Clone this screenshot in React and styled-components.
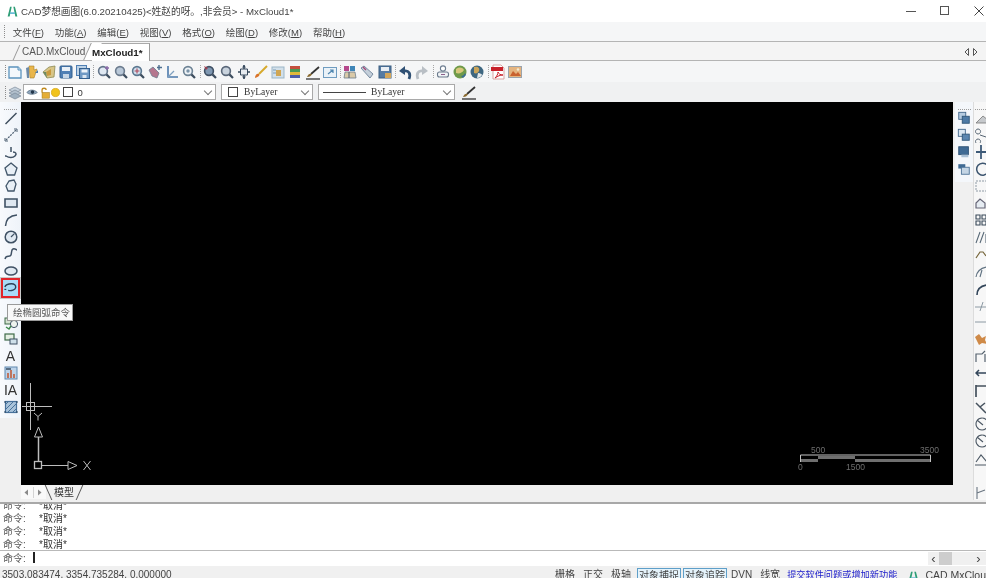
import styled, { createGlobalStyle } from "styled-components";

const GlobalStyle = createGlobalStyle`
  html, body {
    margin: 0;
    padding: 0;
    background: #f0f0f0;
  }
  body {
    font-family: "Liberation Sans", "Noto Sans CJK SC", sans-serif;
    color: #333;
  }
`;

const Lens = ({ c = "#5a6f86", fill = "#dfe8f2", extra }) => (
  <>
    <circle cx="7" cy="7" r="4.4" fill={fill} stroke={c} strokeWidth="1.6" />
    <path d="M10.4 10.4 14 14" stroke="#3d4d5e" strokeWidth="2.2" />
    {extra}
  </>
);

const glyphs = {
  // top toolbar
  newFile: (
    <>
      <path d="M2 3h9l3 3v8H2z" fill="#f4f8fc" stroke="#5b93bd" strokeWidth="1.3" />
      <path d="M11 3v3h3" fill="#cfe2f1" stroke="#5b93bd" />
    </>
  ),
  open: (
    <>
      <path d="M5 2h5v4l3-1-3 9H6z" fill="#e9b64b" stroke="#a9812c" strokeWidth=".6" />
      <path d="M2 4l3-1v11H3z" fill="#6d8aa8" />
      <path d="M11 9l3-3v3z" fill="#4f7fae" />
    </>
  ),
  openMore: (
    <>
      <path d="M2 8l6-5 6-1-1 11-7 1z" fill="#d8c587" stroke="#8c8a55" strokeWidth=".8" />
      <path d="M5 8l5-3v6l-4 1z" fill="#c99a3e" />
      <path d="M2 8l3 0 1 6z" fill="#6d8a63" />
    </>
  ),
  save: (
    <>
      <rect x="2" y="2" width="12" height="12" rx="1" fill="#4f7fb4" stroke="#33608f" />
      <rect x="4" y="3" width="8" height="4" fill="#e9f0f7" />
      <rect x="5" y="10" width="6" height="4" fill="#c6d6e6" />
    </>
  ),
  saveAll: (
    <>
      <rect x="1.5" y="1.5" width="10" height="10" fill="#bcd2e6" stroke="#4f7fb4" />
      <rect x="4.5" y="4.5" width="10" height="10" fill="#6f99c4" stroke="#33608f" />
      <rect x="6.5" y="5.5" width="6" height="3" fill="#eef4fa" />
      <rect x="7.5" y="11" width="4" height="3" fill="#dbe6f1" />
    </>
  ),
  zoomWindow: <Lens c="#62748a" extra={<path d="M11 2v4M9 4h4" stroke="#8a6aa8" strokeWidth="1.3" />} />,
  zoomIn: <Lens c="#6c7c8e" fill="#b9c8d8" />,
  zoomPlus: <Lens c="#5c7890" fill="#cfe0ee" extra={<path d="M7 4.6v4.8M4.6 7h4.8" stroke="#b0485a" strokeWidth="1.1" />} />,
  zoomArrow: (
    <>
      <path d="M2 6l4-3 6 6-2 5-5-2z" fill="#b5768e" stroke="#6c7c8e" strokeWidth=".8" />
      <path d="M12 1v5M10 3.5h5" stroke="#4d6f8f" strokeWidth="1.4" />
    </>
  ),
  axes: (
    <>
      <path d="M4 2v11h10" fill="none" stroke="#4b79ab" strokeWidth="1.6" />
      <path d="M4 13l6-6" stroke="#7fa0c0" strokeWidth="1.2" />
    </>
  ),
  zoomCenter: <Lens c="#6c8294" fill="#eef3f7" extra={<circle cx="7" cy="7" r="1.7" fill="#7a93a8" />} />,
  zoomDark: <Lens c="#3f5064" fill="#7f98b2" extra={<path d="M2 2l4 2-2 2z" fill="#a33e4e" />} />,
  zoomPlain: <Lens c="#596779" fill="#c9d3dd" />,
  pan: (
    <>
      <path d="M8 1v14M2 8h12" stroke="#36495c" strokeWidth="1.5" />
      <path d="M4.5 5h7v6h-7z" fill="#e6ebf0" stroke="#36495c" />
      <path d="M8 1l-2 2.4h4zM8 15l-2-2.4h4z" fill="#36495c" />
    </>
  ),
  brushYellow: (
    <>
      <path d="M14 2 6 10" stroke="#d6a92c" strokeWidth="2" />
      <path d="M2 14c0-3 2-5 4-4 1 1 0 3-4 4z" fill="#d9742a" />
    </>
  ),
  gridBlue: (
    <>
      <rect x="2" y="3" width="12" height="11" fill="#d2e0ea" stroke="#9bb5c7" />
      <rect x="6" y="6" width="5" height="6" fill="#d0a653" />
      <path d="M3 6h3M3 9h3" stroke="#7b9cb8" />
    </>
  ),
  stack: (
    <>
      <rect x="3" y="2" width="10" height="3" fill="#c5503f" />
      <rect x="3" y="5" width="10" height="3" fill="#4a9a55" />
      <rect x="3" y="8" width="10" height="3" fill="#e0b93c" />
      <rect x="3" y="11" width="10" height="3" fill="#4d5ea8" />
    </>
  ),
  brushDark: (
    <>
      <path d="M14 3 6 10" stroke="#333" strokeWidth="1.8" />
      <path d="M2 13c1-3 3-4 5-3-1 2-2 3-5 3z" fill="#8a6a2f" />
      <path d="M1 15h14" stroke="#222" strokeWidth="1.2" />
    </>
  ),
  windowArrow: (
    <>
      <rect x="1.5" y="3.5" width="13" height="10" fill="#eaf2f8" stroke="#6f9cc0" />
      <path d="M6 10l5-4M8 6h3v3" fill="none" stroke="#4f86b0" strokeWidth="1.2" />
    </>
  ),
  chart: (
    <>
      <rect x="2" y="2" width="5" height="5" fill="#b5488c" />
      <rect x="8" y="2" width="5" height="5" fill="#3f86b8" />
      <path d="M3 8h10l1 6H2z" fill="#d9c9a8" stroke="#6d7d8d" strokeWidth=".8" />
      <path d="M7 8v6" stroke="#4d5d6d" />
    </>
  ),
  tag: (
    <>
      <path d="M2 4l3-2 9 8-3 4z" fill="#c4cfda" stroke="#6d8298" strokeWidth=".9" />
      <path d="M4 3l3 3" stroke="#a54a78" strokeWidth="1.4" />
    </>
  ),
  disk: (
    <>
      <rect x="2" y="2" width="12" height="12" fill="#557ba3" stroke="#3b5d80" />
      <rect x="4" y="3" width="8" height="4" fill="#e9eef4" />
      <path d="M8 9h6v5H8z" fill="#d3a65a" />
    </>
  ),
  undo: (
    <>
      <path d="M12 15c2-5 0-9-5-8" fill="none" stroke="#2f5074" strokeWidth="2.8" />
      <path d="M8 2 2 7l6 4z" fill="#2f5074" />
    </>
  ),
  redo: (
    <>
      <path d="M4 15C2 10 4 6 9 7" fill="none" stroke="#b9bfc5" strokeWidth="2.8" />
      <path d="M8 2l6 5-6 4z" fill="#b9bfc5" />
    </>
  ),
  plotter: (
    <>
      <circle cx="8" cy="4.5" r="2.6" fill="#fff" stroke="#6f7f92" strokeWidth="1.1" />
      <rect x="2.5" y="8" width="11" height="5" rx="2" fill="#f0f3f6" stroke="#6a7a8c" strokeWidth="1.1" />
      <path d="M6 10.5h4" stroke="#8c5f8c" />
    </>
  ),
  globeGreen: (
    <>
      <circle cx="8" cy="8" r="6.5" fill="#6f9a4a" />
      <path d="M4 5c3-2 6-2 8 1-2 3-5 4-8 3z" fill="#d7c77b" />
      <path d="M9 12c2 0 3-1 4-3l1 2-3 3z" fill="#3a6d93" />
    </>
  ),
  globeDark: (
    <>
      <circle cx="8" cy="8" r="6.5" fill="#3d6680" />
      <path d="M5 3c4-1 6 1 5 4-1 2-3 3-5 2z" fill="#c9a45a" />
      <path d="M9 9c2 0 4 1 4 2-1 2-3 3-5 3z" fill="#e4e8ea" />
    </>
  ),
  pdf: (
    <>
      <path d="M3 1h8l3 3v11H3z" fill="#fff" stroke="#d9a3a3" />
      <rect x="1" y="3" width="12" height="4" fill="#c8202a" />
      <path d="M5 14c2-2 3-4 3-6 1 2 2 3 5 3-3 0-5 1-8 3z" fill="none" stroke="#c8202a" />
    </>
  ),
  picture: (
    <>
      <rect x="1.5" y="2.5" width="13" height="11" fill="#e5b47f" stroke="#9aa3ac" />
      <path d="M3 12l3-5 3 3 2-2 3 4z" fill="#c9622f" />
      <circle cx="11" cy="5.5" r="1.3" fill="#f4ead2" />
    </>
  ),
  // second toolbar
  layers: (
    <>
      <path d="M8 3l6 3-6 3-6-3z" fill="#c7d3de" stroke="#7b8a99" strokeWidth=".7" />
      <path d="M8 6l6 3-6 3-6-3z" fill="#b2c0cd" stroke="#7b8a99" strokeWidth=".7" />
      <path d="M8 9l6 3-6 3-6-3z" fill="#9fb0bf" stroke="#7b8a99" strokeWidth=".7" />
    </>
  ),
  eye: (
    <>
      <path d="M1 8c3-4 9-4 13 0-4 3-10 3-13 0z" fill="#90a7bd" stroke="#52677c" strokeWidth=".8" />
      <circle cx="8" cy="7.5" r="2.2" fill="#24384c" />
    </>
  ),
  lock: (
    <>
      <path d="M5 8V5c0-3 5-3 5 0" fill="none" stroke="#c08a1e" strokeWidth="1.6" />
      <rect x="5" y="8" width="9" height="7" fill="#e4ad36" stroke="#a87c1d" strokeWidth=".7" />
    </>
  ),
  sun: <circle cx="8" cy="8" r="5" fill="#f1c31c" stroke="#d9a918" />,
  // left draw toolbar
  line: <path d="M2.5 14 13.5 3" stroke="#3c4c5c" strokeWidth="1.5" />,
  xline: (
    <>
      <path d="M3 13 13 3" stroke="#4e6072" strokeWidth="1.2" strokeDasharray="2 1" />
      <path d="M2 11v3h3M11 2h3v3" fill="none" stroke="#4e6072" />
    </>
  ),
  pline: (
    <path d="M2 12h1c3 2 7 2 9 0 2-2 1-4-2-4M8 3v5" fill="none" stroke="#3f5164" strokeWidth="1.5" />
  ),
  pentagon: <path d="M8 2l6 5-2.4 7H4.4L2 7z" fill="#e8eff6" stroke="#42566a" strokeWidth="1.3" />,
  blob: <path d="M6 3l5-1 2 4-2 7H5L3 8z" fill="#e8eff6" stroke="#42566a" strokeWidth="1.3" />,
  rect: <path d="M2 4h12v8H2z" fill="#dfe8f1" stroke="#3f5164" strokeWidth="1.6" />,
  arc: <path d="M2.5 14C3 7 7 3.5 14 3" fill="none" stroke="#3f5164" strokeWidth="1.5" />,
  circle: (
    <>
      <circle cx="8" cy="8" r="5.8" fill="#e0e9f2" stroke="#3f5164" strokeWidth="1.5" />
      <path d="M8 8l3.4-3.4" stroke="#3f5164" strokeWidth="1.2" />
    </>
  ),
  spline: (
    <path d="M2 13c1-5 5-1 6-4s0-5 2-6 3 1 4 1" fill="none" stroke="#3f5164" strokeWidth="1.5" />
  ),
  ellipse: <ellipse cx="8" cy="8" rx="6" ry="4" fill="#e0e9f2" stroke="#3f5164" strokeWidth="1.5" />,
  ellipseArc: (
    <>
      <path d="M2 7C3 4 6 3.500 9 3.500c3 0 5 1.500 4.500 4C13 10 9 11.500 5.500 10.500" fill="none" stroke="#2d4257" strokeWidth="1.5" />
      <path d="M1.500 9.500h2" stroke="#2d4257" strokeWidth="1.300" />
    </>
  ),
  insert: (
    <>
      <rect x="2" y="4" width="9" height="6" fill="#d4e2d0" stroke="#3f6a48" />
      <circle cx="11" cy="10" r="3.600" fill="#eef3ee" stroke="#3f5164" />
      <path d="M3 13l3 2 2-3" fill="none" stroke="#3e8a4c" strokeWidth="1.4" />
    </>
  ),
  block: (
    <>
      <rect x="2" y="3" width="9" height="6" fill="#e5efe3" stroke="#3f6a48" strokeWidth="1.2" />
      <rect x="7" y="8" width="7" height="5" fill="#cfe0ea" stroke="#3f5164" />
    </>
  ),
  hatch: (
    <>
      <rect x="2" y="2" width="12" height="12" fill="#bcd3ea" stroke="#5f87ad" />
      <path d="M5 13V8M8 13V5M11 13V9" stroke="#c0552f" strokeWidth="1.5" />
      <path d="M3 4h5" stroke="#2d4257" strokeWidth="1.400" />
    </>
  ),
  region: (
    <>
      <rect x="2.500" y="2.500" width="11" height="11" fill="#a9c3da" stroke="#47719a" strokeWidth="1.200" />
      <path d="M2 6l4-4M2 11l9-9M4 14l10-10M9 14l5-5" stroke="#47719a" />
      <path d="M1 3h2M13 3h2M1 13h2M13 13h2" stroke="#25425f" />
    </>
  ),
  // right side toolbars
  viewA: (
    <>
      <rect x="2" y="1.500" width="8" height="8" fill="#b5cbe0" stroke="#3e6388" />
      <rect x="6" y="6" width="8" height="8" fill="#4d7aa6" stroke="#2e5578" />
    </>
  ),
  viewB: (
    <>
      <rect x="1.500" y="1.500" width="8" height="8" fill="#dbe7f2" stroke="#3e6388" />
      <rect x="6" y="7" width="8" height="7" fill="#5b86b0" stroke="#2e5578" />
    </>
  ),
  viewC: (
    <>
      <rect x="2" y="2" width="11" height="9" fill="#3f6a94" stroke="#2b4f72" />
      <rect x="5" y="11" width="8" height="3" fill="#a9c0d6" />
    </>
  ),
  viewD: (
    <>
      <rect x="1.500" y="2.500" width="8" height="5" fill="#3f6a94" />
      <rect x="5" y="6" width="9" height="8" fill="#c4d5e5" stroke="#4a7096" />
    </>
  ),
  erase: <path d="M1 13 8 6l6 5-3 2z" fill="#c6c9cc" stroke="#777" strokeWidth=".8" />,
  copy: <path d="M3 7a2.500 2.500 0 1 1 .1 0M3 12a2.500 2.500 0 1 0 .1 0M5 8l9 3" fill="none" stroke="#556472" strokeWidth="1" />,
  move: <path d="M6 1v14M1 8h14" stroke="#3d5a78" strokeWidth="1.800" />,
  rotate: <path d="M12 4A6 6 0 1 0 13 11" fill="none" stroke="#3d5670" strokeWidth="1.500" />,
  scale: <path d="M1 3h11v10H1z" fill="none" stroke="#8f9ba6" strokeDasharray="2 1" />,
  mirror: <path d="M1 13V8l4-4 5 4v5z" fill="#e6ecf2" stroke="#667" strokeWidth="1.200" />,
  array: <path d="M1 3h4v4H1zM7 3h4v4H7zM1 9h4v4H1zM7 9h4v4H7z" fill="none" stroke="#3a4a5a" strokeWidth="1.100" />,
  offset: <path d="M5 3 1 14M9 3 5 14M11 14V5" fill="none" stroke="#5a6a78" strokeWidth="1.100" />,
  chamfer: <path d="M1 12 5 6h3l3 4" fill="none" stroke="#75653a" strokeWidth="1.200" />,
  trim: <path d="M1 14C2 8 5 5 12 4M5 14 7 7" fill="none" stroke="#607282" strokeWidth="1.100" />,
  fillet: <path d="M2 15C2 9 5 6 12 5" fill="none" stroke="#33465a" strokeWidth="1.600" />,
  extend: <path d="M0 10h13M8 5 5 14" stroke="#8c99a3" strokeWidth="1" />,
  dash: <path d="M0 8h12" stroke="#8c99a3" strokeWidth="1" />,
  explode: <path d="M0 6l4-3 3 4 4-2-1 4 2 4-5-1-3 2z" fill="#cf8a48" />,
  stretch: <path d="M1 14V6h6l3-3M10 6v8" fill="none" stroke="#56636f" strokeWidth="1.200" />,
  arrow: <path d="M1 8h11M4 5 1 8l3 3" fill="none" stroke="#33465a" strokeWidth="1.500" />,
  dim: <path d="M1 3v12M1 4h10" stroke="#46525e" strokeWidth="1.700" />,
  wrench: <path d="M1 4l4 4 6 6M5 8l5-4" fill="none" stroke="#46525e" strokeWidth="1.500" />,
  clock: <path d="M7 2a6 6 0 1 0 .1 0M2 4l6 5" fill="none" stroke="#4c5864" strokeWidth="1.100" />,
  roof: <path d="M1 12 6 5l6 7M0 15h14" fill="none" stroke="#4c5864" strokeWidth="1.100" />,
  corner: <path d="M2 3v12M2 9l8-3" fill="none" stroke="#6a7682" strokeWidth="1.100" />,
  logo: (
    <>
      <path d="M2 14 5 2h2L4.500 14zM9 2h2l3 12h-2.500z" fill="#2f9e77" />
      <path d="M5 9h6v2H5z" fill="#5fb8d4" />
    </>
  ),
};

const Glyph = ({ name, size = 16 }) => (
  <svg width={size} height={size} viewBox="0 0 16 16">
    {glyphs[name]}
  </svg>
);

const topTools = [
  ["newFile", "open", "openMore", "save", "saveAll"],
  ["zoomWindow", "zoomIn", "zoomPlus", "zoomArrow", "axes", "zoomCenter"],
  ["zoomDark", "zoomPlain", "pan", "brushYellow", "gridBlue", "stack", "brushDark", "windowArrow"],
  ["chart", "tag", "disk"],
  ["undo", "redo"],
  ["plotter", "globeGreen", "globeDark"],
  ["pdf", "picture"],
];

const drawTools = [
  "line", "xline", "pline", "pentagon", "blob", "rect", "arc", "circle", "spline", "ellipse",
  "ellipseArc", "blank", "insert", "block", "A", "hatch", "IA", "region",
];

const viewTools = ["viewA", "viewB", "viewC", "viewD"];

const modifyTools = [
  "erase", "copy", "move", "rotate", "scale", "mirror", "array", "offset", "chamfer", "trim",
  "fillet", "extend", "dash", "explode", "stretch", "arrow", "dim", "wrench", "clock", "clock",
  "roof", "blank", "corner",
];

const menus = [
  ["文件", "F"], ["功能", "A"], ["编辑", "E"], ["视图", "V"],
  ["格式", "O"], ["绘图", "D"], ["修改", "M"], ["帮助", "H"],
];

const history = ["*取消*", "*取消*", "*取消*", "*取消*"];

const statusItems = [
  { label: "栅格" },
  { label: "正交" },
  { label: "极轴" },
  { label: "对象捕捉", on: true },
  { label: "对象追踪", on: true },
  { label: "DVN" },
  { label: "线宽" },
];

export default function App() {
  return (
    <>
      <GlobalStyle />
      <Shell>
        <TitleBar>
          <Glyph name="logo" size={13} />
          <TitleText>CAD梦想画图(6.0.20210425)&lt;姓赵的呀。,非会员&gt; - MxCloud1*</TitleText>
          <WindowButtons>
            <WindowButton>
              <svg width="11" height="11"><path d="M0 5.500h10" stroke="#555" /></svg>
            </WindowButton>
            <WindowButton>
              <svg width="11" height="11"><rect x=".5" y=".5" width="8" height="8" fill="none" stroke="#555" /></svg>
            </WindowButton>
            <WindowButton>
              <svg width="11" height="11"><path d="M.5 .5l9 9M9.500 .5l-9 9" stroke="#444" /></svg>
            </WindowButton>
          </WindowButtons>
        </TitleBar>

        <MenuBar>
          <Gripper />
          {menus.map(([label, key]) => (
            <MenuItem key={key}>
              {label}(<u>{key}</u>)
            </MenuItem>
          ))}
        </MenuBar>

        <DocTabs>
          <InactiveTab>CAD.MxCloud</InactiveTab>
          <ActiveTab>MxCloud1*</ActiveTab>
          <TabArrows>
            <svg width="16" height="8">
              <path d="M4.500 .5v7L1 4zM9.500 .5v7L13 4z" fill="none" stroke="#555" />
            </svg>
          </TabArrows>
        </DocTabs>

        <Toolbar>
          <Gripper />
          {topTools.map((group, i) => (
            <ToolGroup key={i}>
              {group.map((name) => (
                <ToolCell key={name}>
                  <Glyph name={name} />
                </ToolCell>
              ))}
            </ToolGroup>
          ))}
        </Toolbar>

        <LayerBar>
          <Gripper />
          <ToolCell>
            <Glyph name="layers" />
          </ToolCell>
          <Combo $width={193}>
            <ComboIcons>
              <Glyph name="eye" size={13} />
              <Glyph name="lock" size={13} />
              <Glyph name="sun" size={13} />
              <Swatch />
            </ComboIcons>
            <ComboText $plain>0</ComboText>
            <Chevron />
          </Combo>
          <Combo $width={92} $gap={6}>
            <Swatch />
            <ComboText>ByLayer</ComboText>
            <Chevron />
          </Combo>
          <Combo $width={137} $gap={5}>
            <LineSample />
            <ComboText>ByLayer</ComboText>
            <Chevron />
          </Combo>
          <ToolCell>
            <Glyph name="brushDark" />
          </ToolCell>
        </LayerBar>

        <Workspace>
          <LeftDock>
            <DrawToolbar>
              <VerticalGripper />
              {drawTools.map((name, i) => (
                <SideCell key={i} $active={name === "ellipseArc"}>
                  {name === "A" || name === "IA" ? (
                    <TextTool>{name}</TextTool>
                  ) : name === "blank" ? null : (
                    <Glyph name={name} />
                  )}
                </SideCell>
              ))}
            </DrawToolbar>
            <Tooltip>绘椭圆弧命令</Tooltip>
          </LeftDock>

          <CenterColumn>
            <Canvas>
              <CanvasDrawing viewBox="21 102 932 383">
                <g stroke="#bdbdbd" fill="none">
                  <path d="M30.500 383v47M22 406.500h30" />
                  <rect x="26.500" y="402.500" width="8" height="8" />
                  <path d="M30.500 402.500v8M26.500 406.500h8" />
                  <path d="M34 413l4 3.500 4-3.500M38 416.500v4" />
                  <path d="M38.500 437v24" strokeWidth="1.500" />
                  <path d="M38.500 427l-4 10h8z" />
                  <rect x="34.500" y="461.500" width="7" height="7" strokeWidth="1.300" />
                  <path d="M42 465.500h26" />
                  <path d="M68 461.500l9 4-9 4z" />
                  <path d="M83.500 461l7 9M90.500 461l-7 9" />
                </g>
                <g fill="#6f6f6f" stroke="none">
                  <rect x="818" y="456" width="37" height="3" />
                  <rect x="801" y="459" width="17" height="3" />
                  <rect x="855" y="459" width="75" height="3" />
                </g>
                <path d="M800.500 462v-7h130v7" fill="none" stroke="#c4c4c4" />
                <ScaleLabels>
                  <text x="811" y="453">500</text>
                  <text x="920" y="453">3500</text>
                  <text x="798" y="470">0</text>
                  <text x="846" y="470">1500</text>
                </ScaleLabels>
              </CanvasDrawing>
            </Canvas>
            <ModelTabs>
              <ScrollArrows>
                <svg width="25" height="13">
                  <path d="M7 3.500v6L3.500 6.500z" fill="#8a8a8a" />
                  <path d="M17 3.500v6l3.500-3z" fill="#8a8a8a" />
                  <path d="M12.500 1v11" stroke="#d4d4d4" />
                </svg>
              </ScrollArrows>
              <ModelTab>模型</ModelTab>
            </ModelTabs>
          </CenterColumn>

          <RightDock>
            <ViewToolbar>
              <VerticalGripper />
              {viewTools.map((name) => (
                <SideCell key={name}>
                  <Glyph name={name} size={14} />
                </SideCell>
              ))}
            </ViewToolbar>
            <ModifyToolbar>
              <VerticalGripper />
              {modifyTools.map((name, i) => (
                <SideCell key={i} $left>
                  {name === "blank" ? null : <Glyph name={name} />}
                </SideCell>
              ))}
            </ModifyToolbar>
          </RightDock>
        </Workspace>

        <CommandWindow>
          <History>
            {history.map((text, i) => (
              <CommandLine key={i}>
                <Prompt>命令:</Prompt>
                {text}
              </CommandLine>
            ))}
          </History>
          <InputRow>
            <Prompt $short>命令:</Prompt>
            <Caret />
            <HScroll>
              <ScrollChevron>‹</ScrollChevron>
              <ScrollThumb />
              <ScrollChevron>›</ScrollChevron>
            </HScroll>
          </InputRow>
        </CommandWindow>

        <StatusBar>
          <Coords>3503.083474, 3354.735284, 0.000000</Coords>
          <StatusItems>
            {statusItems.map((item) => (
              <StatusItem key={item.label} $on={item.on}>
                {item.label}
              </StatusItem>
            ))}
            <StatusLink>提交软件问题或增加新功能</StatusLink>
            <Glyph name="logo" size={13} />
            <Brand>CAD MxCloud</Brand>
          </StatusItems>
        </StatusBar>
      </Shell>
    </>
  );
}

const Shell = styled.div`
  width: 986px;
  height: 578px;
  overflow: hidden;
  display: flex;
  flex-direction: column;
  background: #f0f0f0;
  filter: blur(0.35px);
`;

const TitleBar = styled.div`
  height: 22px;
  flex: none;
  display: flex;
  align-items: center;
  padding-left: 6px;
  background: #fff;
`;

const TitleText = styled.span`
  margin-left: 2px;
  font-size: 9.700px;
  color: #444;
  white-space: nowrap;
`;

const WindowButtons = styled.div`
  margin-left: auto;
  display: flex;
  gap: 23px;
  padding-right: 1px;
`;

const WindowButton = styled.div`
  width: 11px;
  height: 11px;
  display: flex;
`;

const MenuBar = styled.div`
  height: 20px;
  box-sizing: border-box;
  flex: none;
  display: flex;
  align-items: center;
  gap: 10.800px;
  padding-left: 4px;
  background: #f5f6f7;
  border-bottom: 1px solid #b4b4b4;
`;

const Gripper = styled.span`
  width: 1px;
  height: 13px;
  flex: none;
  margin-right: -1px;
  border-left: 1px dotted #8d8d8d;
`;

const MenuItem = styled.span`
  font-size: 9.500px;
  color: #444;
  white-space: nowrap;
  &:nth-child(2) {
    margin-left: -3px;
  }
  u {
    text-decoration-thickness: 1px;
  }
`;

const DocTabs = styled.div`
  height: 19px;
  box-sizing: border-box;
  flex: none;
  display: flex;
  align-items: flex-end;
  padding-left: 22px;
  background: #f4f4f4;
  border-bottom: 1px solid #b4b4b4;
`;

const InactiveTab = styled.span`
  font-size: 10px;
  color: #555;
  width: 70px;
  line-height: 17px;
  white-space: nowrap;
  position: relative;
  &::before {
    content: "";
    position: absolute;
    left: -6px;
    top: 2px;
    height: 15px;
    border-left: 1px solid #999;
    transform: skewX(-24deg);
  }
`;

const ActiveTab = styled.span`
  font-size: 9.800px;
  font-weight: bold;
  color: #222;
  width: 57px;
  height: 17px;
  line-height: 17px;
  margin-bottom: -1px;
  background: #fff;
  border-top: 1px solid #aaa;
  border-right: 1px solid #999;
  white-space: nowrap;
  position: relative;
  z-index: 1;
  &::before {
    content: "";
    position: absolute;
    left: -5px;
    top: -1px;
    width: 10px;
    height: 17px;
    background: #fff;
    border-left: 1px solid #999;
    transform: skewX(-24deg);
    z-index: -1;
  }
`;

const TabArrows = styled.div`
  margin-left: auto;
  height: 17px;
  display: flex;
  align-items: center;
  padding-right: 6px;
`;

const Toolbar = styled.div`
  height: 21px;
  flex: none;
  display: flex;
  align-items: center;
  padding-left: 5px;
  background: #f5f6f7;
`;

const ToolGroup = styled.div`
  display: flex;
  margin-right: 3.700px;
  position: relative;
  &:not(:last-child)::after {
    content: "";
    position: absolute;
    right: -3px;
    top: 2px;
    height: 13px;
    border-right: 1px dotted #a5a5a5;
  }
`;

const ToolCell = styled.span`
  width: 17.100px;
  height: 17px;
  flex: none;
  display: flex;
  align-items: center;
  justify-content: center;
`;

const LayerBar = styled.div`
  height: 20px;
  flex: none;
  display: flex;
  align-items: center;
  padding-left: 5px;
  background: #f0f1f2;
`;

const Combo = styled.div`
  width: ${(p) => p.$width}px;
  height: 16px;
  flex: none;
  box-sizing: border-box;
  margin-right: 5px;
  display: flex;
  align-items: center;
  gap: ${(p) => p.$gap || 0}px;
  padding-left: 4px;
  background: #fff;
  border: 1px solid #a9a9a9;
`;

const ComboIcons = styled.span`
  display: flex;
  align-items: center;
  margin-right: 5px;
  margin-left: -2px;
  & > svg {
    margin-right: -1.500px;
  }
`;

const Swatch = styled.span`
  width: 8px;
  height: 8px;
  flex: none;
  background: #fff;
  border: 1px solid #444;
  margin-left: 2px;
`;

const ComboText = styled.span`
  font-family: ${(p) => (p.$plain ? '"Liberation Sans"' : '"Liberation Serif"')}, serif;
  font-size: 9.500px;
  color: #333;
`;

const LineSample = styled.span`
  width: 43px;
  height: 0;
  flex: none;
  border-top: 1px solid #444;
`;

const Chevron = styled.span`
  margin-left: auto;
  margin-right: 4px;
  margin-top: -3px;
  width: 5px;
  height: 5px;
  border-right: 1px solid #777;
  border-bottom: 1px solid #777;
  transform: rotate(45deg);
`;

const Workspace = styled.div`
  height: 398px;
  flex: none;
  display: flex;
`;

const LeftDock = styled.div`
  width: 21px;
  flex: none;
  position: relative;
`;

const DrawToolbar = styled.div`
  display: flex;
  flex-direction: column;
  align-items: center;
  padding-bottom: 2px;
  background: linear-gradient(90deg, #f8fafd, #eef3f9);
`;

const VerticalGripper = styled.div`
  width: 13px;
  height: 7.500px;
  flex: none;
  box-sizing: border-box;
  border-bottom: 1px dotted #9b9b9b;
`;

const SideCell = styled.div`
  width: 19px;
  height: 17px;
  box-sizing: border-box;
  flex: none;
  display: flex;
  align-items: center;
  justify-content: ${(p) => (p.$left ? "flex-start" : "center")};
  ${(p) => p.$active && `
    height: 20px;
    margin: -1.5px 0;
    border: 2px solid #e1252b;
    background: #a8dcf8;
    outline: 1px solid #c8c8c8;
    position: relative;
    z-index: 1;
  `}
`;

const TextTool = styled.span`
  font-size: 14px;
  color: #333;
  line-height: 17px;
`;

const Tooltip = styled.div`
  position: absolute;
  left: 7px;
  top: 202px;
  z-index: 3;
  height: 17px;
  width: 66px;
  box-sizing: border-box;
  padding-left: 5px;
  line-height: 15px;
  font-size: 9.500px;
  color: #555;
  white-space: nowrap;
  background: #f8f8f8;
  border: 1px solid #9a9a9a;
`;

const CenterColumn = styled.div`
  width: 932px;
  flex: none;
  display: flex;
  flex-direction: column;
`;

const Canvas = styled.div`
  height: 383px;
  flex: none;
  background: #000;
  position: relative;
`;

const CanvasDrawing = styled.svg`
  position: absolute;
  inset: 0;
  width: 100%;
  height: 100%;
`;

const ScaleLabels = styled.g`
  font-family: "Liberation Sans", sans-serif;
  font-size: 8.500px;
  fill: #6e6e6e;
`;

const ModelTabs = styled.div`
  height: 15px;
  flex: none;
  display: flex;
  background: #f0f0f0;
`;

const ScrollArrows = styled.div`
  width: 25px;
  height: 14px;
  flex: none;
  background: #f9f9f9;
`;

const ModelTab = styled.span`
  margin-left: 5px;
  width: 26px;
  text-align: center;
  height: 15px;
  font-size: 10px;
  line-height: 15px;
  color: #333;
  position: relative;
  &::before,
  &::after {
    content: "";
    position: absolute;
    top: 0;
    height: 15px;
    border-left: 1px solid #555;
  }
  &::before {
    left: -3px;
    transform: skewX(24deg);
  }
  &::after {
    right: -3px;
    transform: skewX(-24deg);
  }
`;

const RightDock = styled.div`
  width: 33px;
  flex: none;
  display: flex;
  align-items: flex-start;
  padding-left: 2px;
  box-sizing: border-box;
`;

const ViewToolbar = styled.div`
  width: 18px;
  flex: none;
  display: flex;
  flex-direction: column;
  align-items: center;
  padding-bottom: 4px;
  background: #f4f7fb;
`;

const ModifyToolbar = styled.div`
  height: 398px;
  flex: none;
  width: 13px;
  box-sizing: border-box;
  padding-left: 1px;
  display: flex;
  flex-direction: column;
  overflow: hidden;
  border-left: 1px solid #dcdcdc;
  background: #f7f7f7;
`;

const CommandWindow = styled.div`
  height: 64px;
  flex: none;
  display: flex;
  flex-direction: column;
  background: #fff;
  margin-top: 2px;
  border-top: 2px solid #a8a8a8;
  box-sizing: border-box;
`;

const History = styled.div`
  height: 46px;
  flex: none;
  overflow: hidden;
  display: flex;
  flex-direction: column;
  justify-content: flex-end;
  border-bottom: 1px solid #b9b9b9;
`;

const CommandLine = styled.div`
  height: 13px;
  flex: none;
  display: flex;
  align-items: center;
  padding-left: 3px;
  font-size: 10px;
  color: #333;
`;

const Prompt = styled.span`
  width: ${(p) => (p.$short ? "30px" : "36px")};
  flex: none;
  color: #555;
  font-size: 10px;
  margin-top: ${(p) => (p.$short ? "-2px" : "0")};
`;

const InputRow = styled.div`
  flex: 1;
  display: flex;
  align-items: center;
  padding-left: 3px;
  background: #fff;
`;

const Caret = styled.span`
  width: 1.500px;
  height: 11px;
  margin-top: -2px;
  background: #222;
`;

const HScroll = styled.div`
  margin-left: auto;
  width: 58px;
  height: 13px;
  display: flex;
  align-items: center;
  background: #f0f0f0;
`;

const ScrollChevron = styled.span`
  width: 11px;
  text-align: center;
  flex: none;
  font-size: 13px;
  line-height: 12px;
  color: #444;
  &:last-child {
    margin-left: auto;
    margin-right: 2px;
  }
`;

const ScrollThumb = styled.span`
  width: 13px;
  height: 13px;
  background: #cdcdcd;
`;

const StatusBar = styled.div`
  height: 12px;
  flex: none;
  display: flex;
  padding-left: 2px;
  font-size: 10px;
  color: #444;
  white-space: nowrap;
`;

const Coords = styled.span`
  line-height: 15px;
  padding-top: 1px;
`;

const StatusItems = styled.div`
  margin-left: auto;
  width: 435px;
  flex: none;
  display: flex;
  align-items: flex-start;
  overflow: hidden;
  & > svg {
    margin: 4px 0 0 10px;
    flex: none;
  }
`;

const StatusItem = styled.span`
  flex: none;
  height: 15px;
  line-height: 17px;
  padding: 0 ${(p) => (p.$on ? "1px" : "4px")};
  font-size: 10px;
  ${(p) => p.$on && `
    margin-left: 2px;
    margin-top: 2px;
    line-height: 14px;
    background: #e5f3fb;
    border: 1px solid #5e9fc9;
  `}
`;

const StatusLink = styled.span`
  flex: none;
  margin-left: 3px;
  font-size: 9.200px;
  line-height: 19px;
  color: #2222cc;
  text-decoration: underline;
`;

const Brand = styled.span`
  flex: none;
  margin-left: 5px;
  font-size: 10.500px;
  line-height: 18px;
  color: #444;
`;
